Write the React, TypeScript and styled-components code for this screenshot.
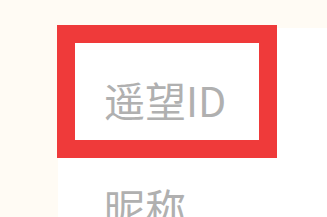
import React from "react";
import styled, { createGlobalStyle } from "styled-components";

const Global = createGlobalStyle`
  html, body {
    margin: 0;
    padding: 0;
    background: #fffbf4;
    overflow: hidden;
  }
  #root {
    width: 327px;
    height: 217px;
    overflow: hidden;
  }
`;

const Page = styled.div`
  width: 327px;
  height: 217px;
  padding: 28px 0 0 58px;
  box-sizing: border-box;
  background: #fffbf4;
  overflow: hidden;
`;

const Panel = styled.div`
  position: relative;
  background: #ffffff;
  height: 100%;
  padding: 51px 0 0 46px;
  box-sizing: border-box;
  display: flex;
  flex-direction: column;
  gap: 66px;
`;

const Label = styled.div`
  font-family: "Noto Sans CJK SC", "Noto Sans", sans-serif;
  font-size: 41px;
  line-height: 41px;
  color: #b0b0b0;
  white-space: nowrap;
`;

const Highlight = styled.div`
  position: absolute;
  left: -1px;
  top: -3px;
  width: 220px;
  height: 133px;
  border: 18px solid #ef3a3a;
  box-sizing: border-box;
  pointer-events: none;
`;

export default function App() {
  return (
    <>
      <Global />
      <Page>
        <Panel>
          <Label>遥望ID</Label>
          <Label>昵称</Label>
          <Highlight />
        </Panel>
      </Page>
    </>
  );
}
